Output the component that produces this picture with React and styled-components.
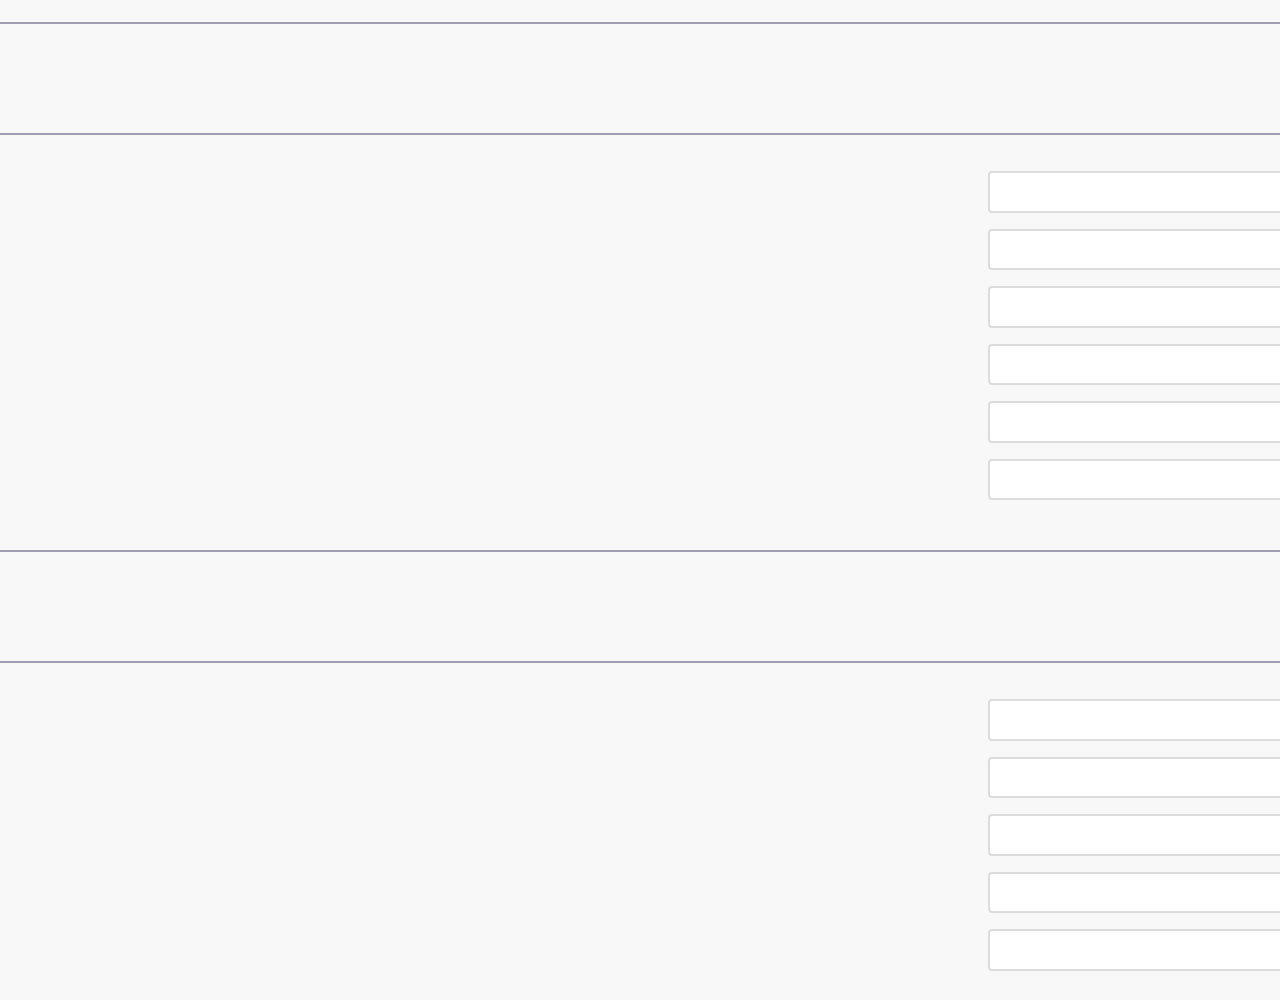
import React from 'react';
import styled, { createGlobalStyle } from 'styled-components';

const GlobalStyle = createGlobalStyle`
  html, body {
    margin: 0;
    padding: 0;
    background-color: #f8f8f8;
    font-family: "Liberation Sans", Arial, sans-serif;
  }
`;

const Page = styled.div`
  padding-top: 22px;
  overflow-x: hidden;
  min-height: 1000px;
  box-sizing: border-box;
`;

const SectionHeader = styled.div`
  height: 109px;
  border-top: 2px solid #a29db1;
  border-bottom: 2px solid #a29db1;
`;

const SectionBody = styled.div`
  display: flex;
  padding: 36px 0 ${({ $last }) => ($last ? '0' : '50px')};
`;

const LabelColumn = styled.div`
  flex: 0 0 988px;
`;

const FieldColumn = styled.div`
  flex: 0 0 400px;
  display: flex;
  flex-direction: column;
  gap: 16px;
`;

const Field = styled.input`
  box-sizing: border-box;
  height: 41.5px;
  width: 100%;
  margin: 0;
  padding: 0 12px;
  background: #ffffff;
  border: 2px solid #dcdcdc;
  border-radius: 4px;
  font-family: inherit;
  font-size: 14px;
  outline: none;
`;

const Section = ({ count, last }) => (
  <>
    <SectionHeader />
    <SectionBody $last={last}>
      <LabelColumn />
      <FieldColumn>
        {Array.from({ length: count }).map((_, i) => (
          <Field key={i} type="text" />
        ))}
      </FieldColumn>
    </SectionBody>
  </>
);

const App = () => {
  return (
    <Page>
      <GlobalStyle />
      <Section count={6} />
      <Section count={5} last />
    </Page>
  );
};

export default App;
